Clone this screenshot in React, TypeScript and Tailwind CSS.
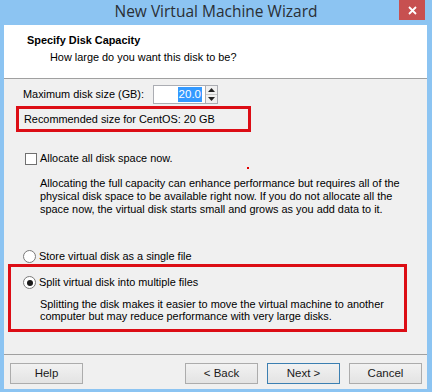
import React, { useState } from 'react';

const font = { fontFamily: '"Liberation Sans", Arial, sans-serif' };

const WinButton: React.FC<{ label: string; primary?: boolean }> = ({ label, primary }) => (
    <button
        type="button"
        className={`w-[73px] h-[21px] text-[11.5px] leading-none text-[#1a1a1a] bg-gradient-to-b from-[#f2f2f2] to-[#e3e3e3] border ${primary ? 'border-[#3c7fb1]' : 'border-[#acacac]'}`}
    >
        {label}
    </button>
);

const Radio: React.FC<{ checked: boolean }> = ({ checked }) => (
    <span className="w-[13px] h-[13px] rounded-full border border-[#7a7a7a] bg-white mr-[3px] flex items-center justify-center shrink-0">
        {checked && <span className="w-[6px] h-[6px] rounded-full bg-[#1a1a1a]" />}
    </span>
);

const App: React.FC = () => {
    const [allocate, setAllocate] = useState(false);
    const [mode, setMode] = useState<'single' | 'split'>('split');

    return (
        <div style={font} className="w-[432px] h-[392px] bg-[#8cc4f2] flex flex-col pl-[4px] pr-[5px] pb-[3px] text-[10.9px] text-black">
            {/* title bar */}
            <div className="relative h-[25px] flex items-center justify-center shrink-0 -ml-[4px] -mr-[5px]">
                <span className="text-[15.5px] text-[#2a2f35] leading-none -mt-[1px]" style={{ fontFamily: '"Open Sans", "Liberation Sans", sans-serif' }}>
                    New Virtual Machine Wizard
                </span>
                <div className="absolute top-0 right-[7px] w-[26px] h-[20px] bg-[#c75050] flex items-center justify-center">
                    <svg width="9" height="9" viewBox="0 0 9 9">
                        <path d="M1 1 L8 8 M8 1 L1 8" stroke="#fff" strokeWidth="1.8" />
                    </svg>
                </div>
            </div>

            <div className="flex-1 flex flex-col bg-[#f0f0f0]">
                {/* header */}
                <div className="h-[54px] bg-white border-b border-[#a0a0a0] pl-[23px] pt-[8px] shrink-0">
                    <div className="font-bold leading-[15px]">Specify Disk Capacity</div>
                    <div className="pl-[23px] leading-[15px] mt-[2px]">How large do you want this disk to be?</div>
                </div>

                {/* body */}
                <div className="flex-1 flex flex-col">
                    <div className="flex items-center mt-[6px] ml-[19px] h-[19px]">
                        <span className="w-[130px]">Maximum disk size (GB):</span>
                        <div className="flex h-[19px]">
                            <div className="w-[53px] h-[19px] border border-[#abadb3] bg-white flex items-center justify-end pr-[3px]">
                                <span className="bg-[#3399ff] text-white px-[1px] leading-[15px] text-[11.5px]">20.0</span>
                            </div>
                            <div className="w-[12px] flex flex-col border-y border-r border-[#abadb3] bg-[#f0f0f0]">
                                <div className="flex-1 flex items-center justify-center border-b border-[#c8c8c8]">
                                    <svg width="7" height="4" viewBox="0 0 7 4"><path d="M3.5 0 L7 4 L0 4 Z" fill="#222" /></svg>
                                </div>
                                <div className="flex-1 flex items-center justify-center">
                                    <svg width="7" height="4" viewBox="0 0 7 4"><path d="M0 0 L7 0 L3.5 4 Z" fill="#222" /></svg>
                                </div>
                            </div>
                        </div>
                    </div>

                    <div className="mt-[2px] ml-[12px] w-[235px] h-[26px] border-[3px] border-[#dc0d15] flex items-center pl-[5px]">
                        Recommended size for CentOS: 20 GB
                    </div>

                    <label className="flex items-center mt-[20px] ml-[21px] h-[13px]" onClick={() => setAllocate(!allocate)}>
                        <span className="w-[12px] h-[12px] border border-[#707070] bg-white mr-[3px] shrink-0" />
                        <span>Allocate all disk space now.</span>
                    </label>

                    <div className="relative ml-[36px] mt-[12px] leading-[13px]">
                        <span className="absolute left-[207px] top-[-10px] w-[2px] h-[2px] bg-[#e00000]" />
                        Allocating the full capacity can enhance performance but requires all of the<br />
                        physical disk space to be available right now. If you do not allocate all the<br />
                        space now, the virtual disk starts small and grows as you add data to it.
                    </div>

                    <label className="flex items-center mt-[34px] ml-[19px] h-[13px]" onClick={() => setMode('single')}>
                        <Radio checked={mode === 'single'} />
                        <span>Store virtual disk as a single file</span>
                    </label>

                    <div className="mt-[1px] ml-[4px] w-[399px] h-[68px] border-[3px] border-[#dc0d15] flex flex-col">
                        <label className="flex items-center mt-[9px] ml-[12px] h-[13px]" onClick={() => setMode('split')}>
                            <Radio checked={mode === 'split'} />
                            <span>Split virtual disk into multiple files</span>
                        </label>
                        <div className="ml-[29px] mt-[9px] leading-[12px]">
                            Splitting the disk makes it easier to move the virtual machine to another<br />
                            computer but may reduce performance with very large disks.
                        </div>
                    </div>
                </div>

                {/* footer */}
                <div className="border-t border-[#a0a0a0] h-[35px] flex items-start pt-[8px] pl-[6px] pr-[5px] shrink-0">
                    <WinButton label="Help" />
                    <div className="flex-1" />
                    <div className="flex gap-[9px]">
                        <WinButton label="< Back" />
                        <WinButton label="Next >" primary />
                        <WinButton label="Cancel" />
                    </div>
                </div>
            </div>
        </div>
    );
};

export default App;
